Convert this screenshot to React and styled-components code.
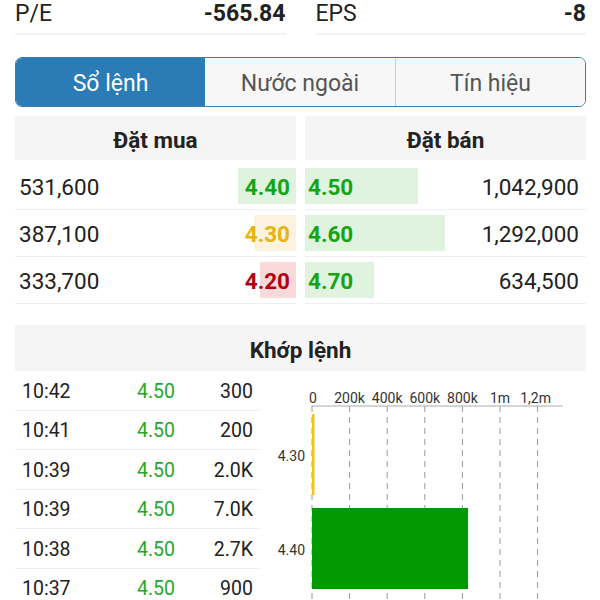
import React from 'react';
import styled, { createGlobalStyle } from 'styled-components';

const GlobalStyle = createGlobalStyle`
    html, body {
        margin: 0;
        padding: 0;
        background: #ffffff;
        overflow: hidden;
    }
    body {
        font-family: Roboto, "Noto Sans", "Liberation Sans", sans-serif;
        color: #222;
    }
`;

const GREEN = '#14a514';
const YELLOW = '#e6b40c';
const RED = '#b3000f';

const levelColors = {
    up: { text: GREEN, bg: '#dff3df' },
    ref: { text: YELLOW, bg: '#fbf3dd' },
    down: { text: RED, bg: '#f9d9da' },
};

const Page = styled.div`
    width: 600px;
    height: 600px;
    padding: 0 14px 0 15px;
    box-sizing: border-box;
`;

const StatsRow = styled.div`
    display: grid;
    grid-template-columns: 1fr 1fr;
    column-gap: 30px;
`;

const Stat = styled.div`
    display: flex;
    justify-content: space-between;
    align-items: center;
    height: 35px;
    padding-bottom: 5px;
    border-bottom: 2px solid #f3f3f3;
    font-size: 23px;
    line-height: 26px;
    box-sizing: border-box;
`;

const StatLabel = styled.span`
    color: #222;
`;

const StatValue = styled.span`
    font-weight: 700;
    color: #222;
`;

const Tabs = styled.div`
    margin-top: 22px;
    height: 50px;
    display: grid;
    grid-template-columns: 189px 190px 1fr;
    border: 1.5px solid #3a7eae;
    border-radius: 7px;
    overflow: hidden;
    box-sizing: border-box;
`;

const Tab = styled.div`
    display: flex;
    align-items: center;
    justify-content: center;
    font-size: 23px;
    padding-top: 2px;
    background: ${(p) => (p.$active ? '#2a7bb6' : '#f7f7f7')};
    color: ${(p) => (p.$active ? '#ffffff' : '#555')};
    border-left: ${(p) => (p.$divider ? '1px solid #cfcfcf' : 'none')};
`;

const Book = styled.div`
    margin-top: 9px;
    display: grid;
    grid-template-columns: 1fr 1fr;
    column-gap: 9px;
`;

const SectionHead = styled.div`
    height: ${(p) => p.$h || 44}px;
    box-sizing: border-box;
    padding-top: 4px;
    background: #f5f5f5;
    display: flex;
    align-items: center;
    justify-content: center;
    font-size: 22.5px;
    font-weight: 700;
    color: #222;
`;

const Rows = styled.div`
    margin-top: 3px;
`;

const BookRow = styled.div`
    height: 47px;
    display: flex;
    align-items: center;
    justify-content: space-between;
    border-bottom: 1px solid #eeeeee;
    box-sizing: border-box;
`;

const Volume = styled.span`
    font-size: 22.5px;
    color: #222;
    padding: ${(p) => (p.$side === 'buy' ? '2px 0 0 4px' : '2px 7px 0 0')};
`;

const PriceCell = styled.div`
    position: relative;
    height: 36px;
    flex: 1;
    display: flex;
    align-items: center;
    justify-content: ${(p) => (p.$side === 'buy' ? 'flex-end' : 'flex-start')};
`;

const PriceBar = styled.div`
    position: absolute;
    top: 0;
    bottom: 0;
    ${(p) => (p.$side === 'buy' ? 'right: 0;' : 'left: 0;')}
    background: ${(p) => p.$bg};
`;

const PriceText = styled.span`
    position: relative;
    font-size: 22.5px;
    font-weight: 700;
    color: ${(p) => p.$color};
    padding: ${(p) => (p.$side === 'buy' ? '2px 6px 0 0' : '2px 0 0 3px')};
`;

const Matched = styled.div`
    margin-top: 21px;
`;

const MatchedBody = styled.div`
    display: grid;
    grid-template-columns: 245px 1fr;
`;

const TradeList = styled.div``;

const TradeRow = styled.div`
    height: 39.5px;
    display: grid;
    grid-template-columns: 115px 1fr auto;
    align-items: center;
    border-bottom: 1px solid #eeeeee;
    box-sizing: border-box;
    font-size: 19.5px;
    padding: 2px 7px 0;
`;

const TradeTime = styled.span`
    color: #222;
`;

const TradePrice = styled.span`
    color: #2aa52a;
`;

const TradeVol = styled.span`
    color: #222;
    text-align: right;
`;

const ChartBox = styled.div``;

const buys = [
    { vol: 531600, price: '4.40', tone: 'up' },
    { vol: 387100, price: '4.30', tone: 'ref' },
    { vol: 333700, price: '4.20', tone: 'down' },
];

const sells = [
    { vol: 1042900, price: '4.50', tone: 'up' },
    { vol: 1292000, price: '4.60', tone: 'up' },
    { vol: 634500, price: '4.70', tone: 'up' },
];

const trades = [
    ['10:42', '4.50', '300'],
    ['10:41', '4.50', '200'],
    ['10:39', '4.50', '2.0K'],
    ['10:39', '4.50', '7.0K'],
    ['10:38', '4.50', '2.7K'],
    ['10:37', '4.50', '900'],
];

const maxVol = 1292000;
const fmt = (n) => n.toLocaleString('en-US');

function BookSide({ title, side, items }) {
    return (
        <div>
            <SectionHead>{title}</SectionHead>
            <Rows>
                {items.map((it, i) => {
                    const c = levelColors[it.tone];
                    const bar = (
                        <PriceCell $side={side}>
                            <PriceBar $side={side} $bg={c.bg} style={{ width: (it.vol / maxVol) * 140 }} />
                            <PriceText $side={side} $color={c.text}>{it.price}</PriceText>
                        </PriceCell>
                    );
                    return (
                        <BookRow key={i}>
                            {side === 'buy' ? (
                                <>
                                    <Volume $side="buy">{fmt(it.vol)}</Volume>
                                    {bar}
                                </>
                            ) : (
                                <>
                                    {bar}
                                    <Volume $side="sell">{fmt(it.vol)}</Volume>
                                </>
                            )}
                        </BookRow>
                    );
                })}
            </Rows>
        </div>
    );
}

function VolumeChart() {
    const x0 = 52;
    const step = 37.6;
    const ticks = ['0', '200k', '400k', '600k', '800k', '1m', '1,2m'];
    const toX = (v) => x0 + (v / 200000) * step;
    const bars = [
        { label: '4.30', vol: 8000, color: '#f0c419', y: 43, h: 81 },
        { label: '4.40', vol: 830000, color: '#009a00', y: 137, h: 81 },
    ];
    return (
        <svg width="326" height="228" viewBox="0 0 326 228">
            {ticks.map((t, i) => (
                <g key={t}>
                    <line
                        x1={x0 + i * step}
                        x2={x0 + i * step}
                        y1={35}
                        y2={228}
                        stroke="#9a9a9a"
                        strokeWidth="1"
                        strokeDasharray="6 5"
                    />
                    <text
                        x={i === 6 ? x0 + i * step - 2 : x0 + i * step + (i === 0 ? 1 : 0)}
                        y={32}
                        fontSize="14"
                        fill="#333"
                        textAnchor="middle"
                        fontFamily="Roboto, sans-serif"
                    >
                        {t}
                    </text>
                </g>
            ))}
            <line x1={x0} x2={303} y1={35} y2={35} stroke="#aaaaaa" strokeWidth="1" />
            {bars.map((b) => (
                <g key={b.label}>
                    <rect x={x0} y={b.y} width={Math.max(toX(b.vol) - x0, 2.5)} height={b.h} fill={b.color} />
                    <text
                        x={45}
                        y={b.y + b.h / 2 + 6}
                        fontSize="14"
                        fill="#333"
                        textAnchor="end"
                        fontFamily="Roboto, sans-serif"
                    >
                        {b.label}
                    </text>
                </g>
            ))}
        </svg>
    );
}

export default function App() {
    return (
        <>
            <GlobalStyle />
            <Page>
                <StatsRow>
                    <Stat>
                        <StatLabel>P/E</StatLabel>
                        <StatValue>-565.84</StatValue>
                    </Stat>
                    <Stat>
                        <StatLabel>EPS</StatLabel>
                        <StatValue>-8</StatValue>
                    </Stat>
                </StatsRow>

                <Tabs>
                    <Tab $active>Sổ lệnh</Tab>
                    <Tab>Nước ngoài</Tab>
                    <Tab $divider>Tín hiệu</Tab>
                </Tabs>

                <Book>
                    <BookSide title="Đặt mua" side="buy" items={buys} />
                    <BookSide title="Đặt bán" side="sell" items={sells} />
                </Book>

                <Matched>
                    <SectionHead $h={46}>Khớp lệnh</SectionHead>
                    <MatchedBody>
                        <TradeList>
                            {trades.map((t, i) => (
                                <TradeRow key={i}>
                                    <TradeTime>{t[0]}</TradeTime>
                                    <TradePrice>{t[1]}</TradePrice>
                                    <TradeVol>{t[2]}</TradeVol>
                                </TradeRow>
                            ))}
                        </TradeList>
                        <ChartBox>
                            <VolumeChart />
                        </ChartBox>
                    </MatchedBody>
                </Matched>
            </Page>
        </>
    );
}
